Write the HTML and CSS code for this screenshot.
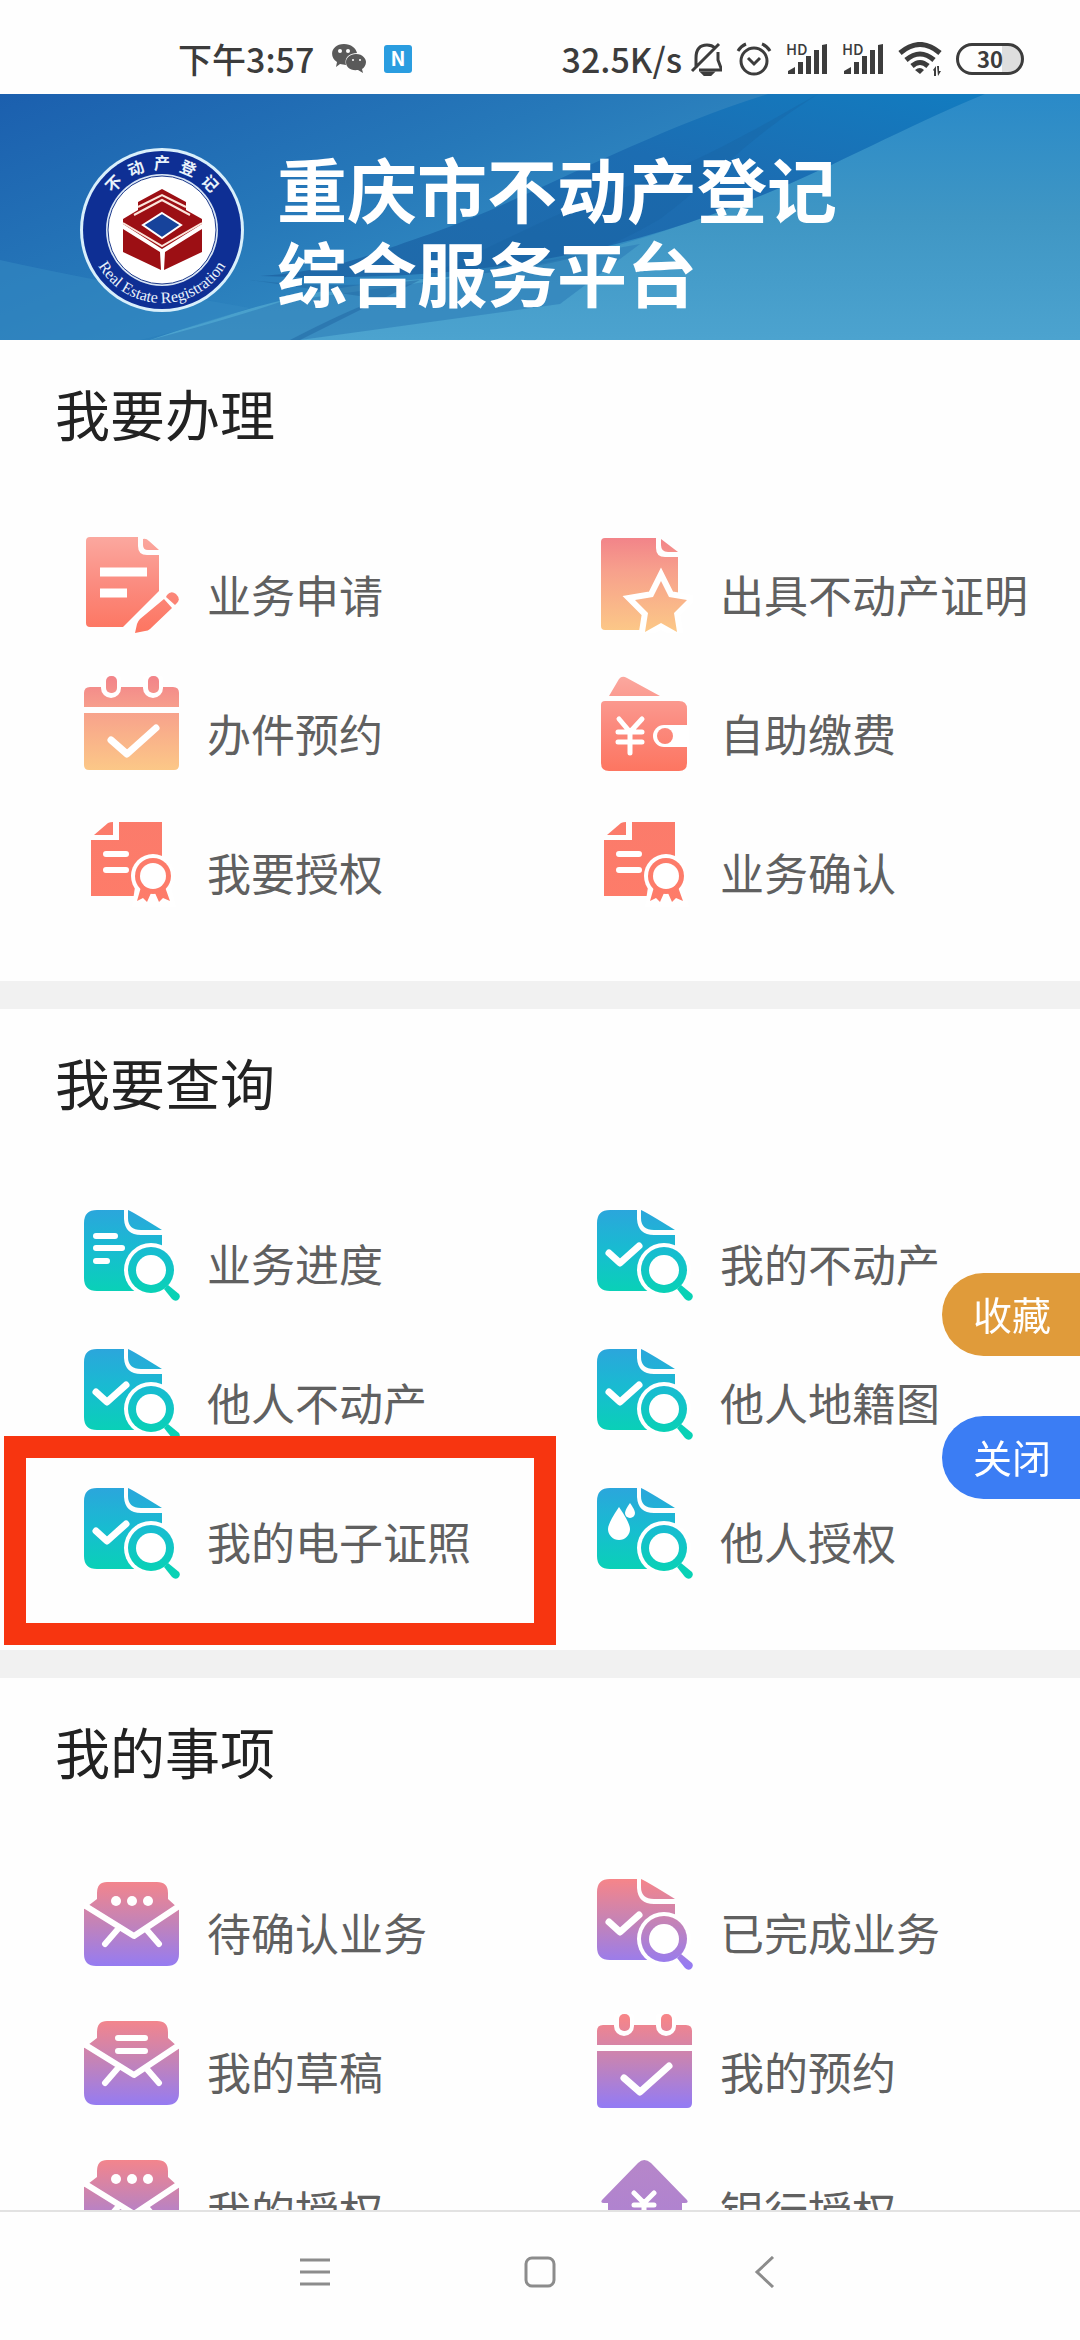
FILE: index.html
```html
<!DOCTYPE html>
<html lang="zh-CN">
<head>
    <meta charset="UTF-8">
    <meta name="viewport" content="width=device-width, initial-scale=1.0">
    <title>重庆市不动产登记综合服务平台</title>
    <link rel="stylesheet" href="styles.css">
</head>
<body>
    <!-- icon sprite -->
    <svg class="sprite" aria-hidden="true">
        <defs>
            <linearGradient id="coral" gradientUnits="userSpaceOnUse" x1="0" y1="0" x2="0" y2="96">
                <stop offset="0" stop-color="#fba89f"/>
                <stop offset="0.5" stop-color="#fb8b7f"/>
                <stop offset="1" stop-color="#fd7560"/>
            </linearGradient>
            <linearGradient id="flat" gradientUnits="userSpaceOnUse" x1="0" y1="0" x2="0" y2="96">
                <stop offset="0" stop-color="#fb7b6b"/>
                <stop offset="1" stop-color="#fe7c69"/>
            </linearGradient>
            <linearGradient id="orange" gradientUnits="userSpaceOnUse" x1="0" y1="0" x2="0" y2="96">
                <stop offset="0" stop-color="#f28389"/>
                <stop offset="0.35" stop-color="#f7a08c"/>
                <stop offset="1" stop-color="#fcc987"/>
            </linearGradient>
            <linearGradient id="teal" gradientUnits="userSpaceOnUse" x1="0" y1="4" x2="0" y2="88">
                <stop offset="0" stop-color="#2ba6dc"/>
                <stop offset="0.5" stop-color="#17bdd0"/>
                <stop offset="1" stop-color="#08d2b5"/>
            </linearGradient>
            <linearGradient id="purple" gradientUnits="userSpaceOnUse" x1="0" y1="4" x2="0" y2="92">
                <stop offset="0" stop-color="#f68589"/>
                <stop offset="0.5" stop-color="#c383b8"/>
                <stop offset="1" stop-color="#947bf3"/>
            </linearGradient>
            <linearGradient id="violet" gradientUnits="userSpaceOnUse" x1="0" y1="0" x2="0" y2="96">
                <stop offset="0" stop-color="#b787c8"/>
                <stop offset="1" stop-color="#ab80d4"/>
            </linearGradient>
            <linearGradient id="sky" x1="0" y1="0" x2="1" y2="0.6">
                <stop offset="0" stop-color="#1b5fae"/>
                <stop offset="0.4" stop-color="#2678b9"/>
                <stop offset="0.75" stop-color="#3590c4"/>
                <stop offset="1" stop-color="#4297ca"/>
            </linearGradient>
            <linearGradient id="sweep" x1="0" y1="1" x2="1" y2="0">
                <stop offset="0" stop-color="#2069a8"/>
                <stop offset="0.6" stop-color="#1c6db2"/>
                <stop offset="1" stop-color="#127cc0"/>
            </linearGradient>
            <linearGradient id="shine" x1="0" y1="0" x2="0" y2="1">
                <stop offset="0" stop-color="#2a8ac8"/>
                <stop offset="0.5" stop-color="#3f96c4"/>
                <stop offset="1" stop-color="#4ca3cf"/>
            </linearGradient>
        </defs>

        <symbol id="doc-pen" viewBox="0 0 96 96">
            <path d="M6 0H54V9Q54 18 63 18H75V54L39 90H6Q2 90 2 86V4Q2 0 6 0Z"/>
            <path d="M59 2Q62 1 65 4L75 13H64Q59 13 59 8Z"/>
            <path class="line w9" d="M16 35H63M16 56H43"/>
            <path d="M80 62L88 71L66 92Q64 94 61 94L51 96L53 87Q54 84 56 82Z"/>
            <path d="M83 58Q87 53 92 57Q97 62 93 66L91 68L82 60Z"/>
        </symbol>
        <symbol id="doc-star" viewBox="0 0 96 96">
            <path d="M8 1H59V11Q59 20 68 20H81V93H8Q4 93 4 89V5Q4 1 8 1Z"/>
            <path d="M64 2L81 15H71Q64 15 64 8Z"/>
            <path class="halo" d="M64 44L72 60L90 63L77 76L80 95L64 86L48 95L51 76L38 63L56 60Z"/>
            <path d="M64 44L72 60L90 63L77 76L80 95L64 86L48 95L51 76L38 63L56 60Z"/>
        </symbol>
        <symbol id="calendar" viewBox="0 0 96 96">
            <path d="M6 11H89Q95 11 95 17V31H0V17Q0 11 6 11Z"/>
            <path d="M0 37H95V89Q95 94 90 94H5Q0 94 0 89Z"/>
            <rect class="cut" x="17" y="-6" width="20" height="28" rx="10"/>
            <rect class="cut" x="59" y="-6" width="20" height="28" rx="10"/>
            <rect x="22" y="0" width="11" height="17" rx="5"/>
            <rect x="64" y="0" width="11" height="17" rx="5"/>
            <path class="line w7" d="M27 64L43 78L72 52"/>
        </symbol>
        <symbol id="wallet" viewBox="0 0 96 96">
            <path d="M22 3Q25 -1 30 2L63 20H12Z"/>
            <path d="M8 25H82Q90 25 90 33V87Q90 95 82 95H12Q4 95 4 87V29Q4 25 8 25Z"/>
            <path class="cut" d="M67 49H92V71H67A11 11 0 0 1 67 49Z"/>
            <circle cx="68" cy="60" r="8"/>
            <path class="line w5" d="M22 43L33 56L45 43M33 56V77M21 56H45M21 66H45"/>
        </symbol>
        <symbol id="cert" viewBox="0 0 96 96">
            <path d="M35 7H78V81H7V25H35Z"/>
            <path d="M10 20L24 8Q26 7 29 7V20Z"/>
            <path class="line w6" d="M22 39H42M22 55H42"/>
            <circle class="cut" cx="69" cy="61" r="22"/>
            <path class="cut" d="M51 72L87 72L92 92H48Z"/>
            <path d="M57 72L67 78L63 87L59 83L53 86Z"/>
            <path d="M81 72L71 78L75 87L79 83L86 86Z"/>
            <circle cx="69" cy="61" r="18"/>
            <circle class="cut" cx="69" cy="61" r="13"/>
        </symbol>
        <symbol id="search-base" viewBox="0 0 96 96">
            <path d="M13 4H40V13Q41 29 57 29H78V85H13Q0 85 0 72V17Q0 4 13 4Z"/>
            <path d="M44 4Q49 6 78 24H57Q44 24 44 12Z"/>
            <circle class="cut" cx="67" cy="64" r="27"/>
            <circle cx="67" cy="64" r="23"/>
            <circle class="cut" cx="67" cy="64" r="15"/>
            <path d="M80 83L84 79L95 88Q97 91 94 94Q91 96 88 93Z"/>
        </symbol>
        <symbol id="search-list" viewBox="0 0 96 96">
            <use href="#search-base" width="96" height="96"/>
            <path class="line w6" d="M12 30H31M12 42H38M12 55H23"/>
        </symbol>
        <symbol id="search-check" viewBox="0 0 96 96">
            <use href="#search-base" width="96" height="96"/>
            <path class="line w7" d="M12 47L23 57L42 40"/>
        </symbol>
        <symbol id="search-drop" viewBox="0 0 96 96">
            <use href="#search-base" width="96" height="96"/>
            <path class="cut" d="M22 23Q33 39 33 45A11 11 0 0 1 11 45Q11 39 22 23Z"/>
            <path class="cut" d="M33 19Q38 26 38 29A5 5 0 0 1 28 29Q28 26 33 19Z"/>
        </symbol>
        <symbol id="mail-base" viewBox="0 0 96 96">
            <path d="M23 7H73Q84 7 84 18V24L95 34V79Q95 91 83 91H12Q0 91 0 79V34L13 24V18Q13 7 23 7Z"/>
            <path class="line w6" d="M0 30L50 61L95 31M34 54L21 69M62 54L75 69"/>
        </symbol>
        <symbol id="mail-dots" viewBox="0 0 96 96">
            <use href="#mail-base" width="96" height="96"/>
            <circle class="cut" cx="32" cy="26" r="5"/>
            <circle class="cut" cx="48" cy="26" r="5"/>
            <circle class="cut" cx="64" cy="26" r="5"/>
        </symbol>
        <symbol id="mail-lines" viewBox="0 0 96 96">
            <use href="#mail-base" width="96" height="96"/>
            <path class="line w6" d="M34 24H61M34 37H61"/>
        </symbol>
        <symbol id="house" viewBox="0 0 96 96">
            <path d="M41 10Q47 4 54 10L90 47Q92 50 88 50H85V91H11V50H7Q3 50 5 47Z"/>
            <path class="line w5" d="M37 40L47 50L57 40M47 50V72M37 52H57M37 61H57"/>
        </symbol>
        <symbol id="signal" viewBox="0 0 42 34">
            <text class="hd" x="0" y="13">HD</text>
            <path d="M2 32V29L9 25V32ZM12 32V20H17V32ZM20 32V14H25V32ZM28 32V8H33V32ZM36 32V3L41 2V32Z"/>
        </symbol>
    </svg>

    <div class="statusbar">
        <span>下午3:57</span>
        <svg class="wechat" width="34" height="30" viewBox="0 0 34 30">
            <path d="M12 0C19 0 24 4 25 9C17 9 12 14 14 21L8 20L4 23L5 18C-4 12 0 0 12 0Z"/>
            <path d="M24 10C31 10 34 15 34 18C34 21 32 24 30 25L31 29L26 26C18 27 14 23 14 18C14 14 18 10 24 10Z"/>
            <g fill="#fff"><circle cx="8" cy="7" r="2"/><circle cx="16" cy="7" r="2"/><circle cx="21" cy="16" r="1"/><circle cx="28" cy="16" r="1"/></g>
        </svg>
        <svg class="note" width="28" height="28" viewBox="0 0 28 28">
            <rect width="28" height="28" rx="3" fill="#2a9de0"/>
            <text class="note-n" x="14" y="21">N</text>
        </svg>
        <span class="speed">32.5K/s</span>
        <svg class="stroke" width="32" height="34" viewBox="0 0 32 34">
            <path d="M6 26V16Q6 3 17 3Q22 3 25 6M28 10V18L31 26V28H9M2 29L29 2"/>
            <path d="M13 31H22L20 33H15Z"/>
        </svg>
        <svg class="stroke" width="36" height="34" viewBox="0 0 36 34">
            <circle cx="18" cy="19" r="13"/>
            <path d="M12 16L18 22L24 16M2 9Q5 4 10 2M34 9Q31 4 26 2"/>
        </svg>
        <svg width="42" height="34"><use href="#signal"/></svg>
        <svg width="42" height="34"><use href="#signal"/></svg>
        <svg class="wifi" width="44" height="34" viewBox="0 0 44 34">
            <path d="M2 11Q22 -6 42 11M8 18Q22 6 36 18M14 24Q22 17 30 24"/>
            <path class="solid" d="M17 28Q22 24 26 28L22 32ZM35 28L38 24V34H36V29ZM39 24H41V29H43L40 34Z"/>
        </svg>
        <span class="battery">30</span>
    </div>

    <main class="content">
        <header class="banner">
            <svg class="banner-bg" viewBox="0 0 1080 246" preserveAspectRatio="none" aria-hidden="true">
                <rect width="1080" height="246" fill="url(#sky)"/>
                <path d="M985 0H1080V246H150C240 215 330 190 410 186C570 175 660 140 760 102C840 70 900 35 985 0Z" fill="url(#shine)"/>
                <path d="M150 246Q230 225 280 208L440 186L640 150L560 210L300 246Z" fill="#2d7db8" opacity="0.6"/>
                <path d="M768 0H985C900 35 840 70 760 102C620 160 470 190 260 182C340 176 370 160 430 140C540 100 640 40 768 0Z" fill="url(#sweep)"/>
                <path d="M818 0C760 32 700 70 620 95C540 125 480 160 420 185C560 175 600 160 660 125C720 80 740 50 818 0Z" fill="#17609f" opacity="0.3"/>
                <path d="M0 166Q90 186 250 214Q200 232 140 246H0Z" fill="#3488c2" opacity="0.6"/>
                <path d="M250 186Q340 196 420 186L300 246H290Q350 215 380 205Z" fill="#1f66a2" opacity="0.5"/>
            </svg>
            <svg class="seal" width="164" height="164" viewBox="0 0 164 164" role="img" aria-label="不动产登记">
                <circle cx="82" cy="82" r="82" fill="#d9effb"/>
                <circle cx="82" cy="82" r="79" fill="#0e2f94"/>
                <circle cx="82" cy="82" r="56" fill="#d9e6f5"/>
                <circle cx="82" cy="82" r="54" fill="#fff" stroke="#1d3a8c" stroke-width="1"/>
                <path id="ring" d="M9 82A73 73 0 0 0 155 82" fill="none"/>
                <g class="seal-cn">
                    <text x="82" y="21" transform="rotate(-46 82 82)">不</text>
                    <text x="82" y="21" transform="rotate(-23 82 82)">动</text>
                    <text x="82" y="21">产</text>
                    <text x="82" y="21" transform="rotate(23 82 82)">登</text>
                    <text x="82" y="21" transform="rotate(46 82 82)">记</text>
                </g>
                <text class="seal-en"><textPath href="#ring" startOffset="50%">Real Estate Registration</textPath></text>
                <path d="M82 41L106 54V62L122 71V76L82 101L43 76V71L58 62V54Z" fill="#9c0f14"/>
                <path d="M43 81L80 104L81 122L43 104ZM122 81L85 104L84 122L122 104Z" fill="#9c0f14"/>
                <path d="M58 59L82 47L106 59M54 67L82 52L110 67M43 75L82 98L122 75" fill="none" stroke="#fbe6dc" stroke-width="2"/>
                <path d="M82 65L101 77L82 90L63 77Z" fill="#17439b" stroke="#fff" stroke-width="2"/>
            </svg>
            <h1>重庆市不动产登记<br>综合服务平台</h1>
        </header>

        <section class="panel">
            <h2>我要办理</h2>
            <div class="grid">
                <a class="item" href="#"><svg class="icon coral"><use href="#doc-pen"/></svg><span>业务申请</span></a>
                <a class="item" href="#"><svg class="icon orange"><use href="#doc-star"/></svg><span>出具不动产证明</span></a>
                <a class="item" href="#"><svg class="icon orange"><use href="#calendar"/></svg><span>办件预约</span></a>
                <a class="item" href="#"><svg class="icon coral"><use href="#wallet"/></svg><span>自助缴费</span></a>
                <a class="item" href="#"><svg class="icon flat"><use href="#cert"/></svg><span>我要授权</span></a>
                <a class="item" href="#"><svg class="icon flat"><use href="#cert"/></svg><span>业务确认</span></a>
            </div>
        </section>

        <section class="panel">
            <h2>我要查询</h2>
            <div class="grid">
                <a class="item" href="#"><svg class="icon teal"><use href="#search-list"/></svg><span>业务进度</span></a>
                <a class="item" href="#"><svg class="icon teal"><use href="#search-check"/></svg><span>我的不动产</span></a>
                <a class="item" href="#"><svg class="icon teal"><use href="#search-check"/></svg><span>他人不动产</span></a>
                <a class="item" href="#"><svg class="icon teal"><use href="#search-check"/></svg><span>他人地籍图</span></a>
                <a class="item marked" href="#"><svg class="icon teal"><use href="#search-check"/></svg><span>我的电子证照</span></a>
                <a class="item" href="#"><svg class="icon teal"><use href="#search-drop"/></svg><span>他人授权</span></a>
            </div>
        </section>

        <section class="panel">
            <h2>我的事项</h2>
            <div class="grid">
                <a class="item" href="#"><svg class="icon purple"><use href="#mail-dots"/></svg><span>待确认业务</span></a>
                <a class="item" href="#"><svg class="icon purple"><use href="#search-check"/></svg><span>已完成业务</span></a>
                <a class="item" href="#"><svg class="icon purple"><use href="#mail-lines"/></svg><span>我的草稿</span></a>
                <a class="item" href="#"><svg class="icon purple"><use href="#calendar"/></svg><span>我的预约</span></a>
                <a class="item" href="#"><svg class="icon purple"><use href="#mail-dots"/></svg><span>我的授权</span></a>
                <a class="item" href="#"><svg class="icon violet"><use href="#house"/></svg><span>银行授权</span></a>
            </div>
        </section>
    </main>

    <div class="floating">
        <button type="button" class="collect">收藏</button>
        <button type="button" class="close">关闭</button>
    </div>

    <nav class="navbar">
        <button type="button" aria-label="菜单">
            <svg width="32" height="32" viewBox="0 0 32 32"><path d="M1 4H31M1 16H31M1 28H31"/></svg>
        </button>
        <button type="button" aria-label="主页">
            <svg width="32" height="32" viewBox="0 0 32 32"><rect x="2" y="2" width="28" height="28" rx="6"/></svg>
        </button>
        <button type="button" aria-label="返回">
            <svg width="32" height="32" viewBox="0 0 32 32"><path d="M24 1L8 16L24 31"/></svg>
        </button>
    </nav>
</body>
</html>
```
FILE: styles.css
```css
* {
    box-sizing: border-box;
}
body {
    display: flex;
    flex-direction: column;
    height: 100vh;
    margin: 0;
    overflow: hidden;
    background-color: #fefefe;
    font-family: "Noto Sans CJK SC", sans-serif;
    color: #606060;
}
.sprite {
    position: absolute;
    width: 0;
    height: 0;
}

/* status bar */
.statusbar {
    display: flex;
    align-items: center;
    flex: none;
    gap: 14px;
    height: 94px;
    padding: 24px 56px 0 178px;
    font-size: 34px;
    font-weight: 500;
    line-height: 40px;
    color: #3c3c3c;
    fill: #3c3c3c;
}
.statusbar svg {
    flex: none;
}
.wechat {
    margin-left: 4px;
    fill: #5a5a5a;
}
.note {
    margin-left: 4px;
}
.note-n {
    font: bold 20px "Noto Sans CJK SC", sans-serif;
    text-anchor: middle;
    fill: #fff;
}
.speed {
    margin: 0 -6px 0 auto;
}
.stroke {
    fill: none;
    stroke: #3c3c3c;
    stroke-width: 3;
}
.hd {
    font: 500 15px "Noto Sans CJK SC", sans-serif;
}
.wifi {
    fill: none;
    stroke: #3c3c3c;
    stroke-width: 5;
}
.solid {
    fill: #3c3c3c;
    stroke: none;
}
.battery {
    width: 68px;
    height: 32px;
    border: 3px solid #3c3c3c;
    border-radius: 16px;
    background: linear-gradient(to right, #fefefe 70%, #dedede 70%);
    font-size: 22px;
    font-weight: bold;
    line-height: 24px;
    text-align: center;
}

/* scrolling content */
.content {
    flex: 1;
    min-height: 0;
    overflow-y: auto;
    scrollbar-width: none;
}
.banner {
    display: flex;
    align-items: center;
    gap: 33px;
    position: relative;
    height: 246px;
    padding: 25px 80px 0;
}
.banner-bg {
    position: absolute;
    inset: 0;
    width: 100%;
    height: 100%;
}
.seal {
    position: relative;
    flex: none;
}
.seal-cn {
    font: bold 16px "Noto Sans CJK SC", sans-serif;
    text-anchor: middle;
    fill: #e8f2fb;
}
.seal-en {
    font: 16px "Liberation Serif", serif;
    text-anchor: middle;
    fill: #e8f2fb;
}
h1 {
    position: relative;
    margin: 0;
    font-size: 70px;
    font-weight: bold;
    line-height: 84px;
    color: #fff;
}
.panel {
    padding-bottom: 70px;
}
.panel + .panel {
    border-top: 28px solid #f1f1f1;
}
h2 {
    margin: 0;
    padding: 32px 55px 85px;
    font-size: 55px;
    font-weight: normal;
    line-height: 80px;
    color: #222;
}
.grid {
    display: grid;
    grid-template-columns: 1fr 1fr;
    gap: 43px 30px;
    padding-left: 84px;
}
.item {
    display: flex;
    gap: 27px;
    position: relative;
    height: 96px;
    color: inherit;
    font-size: 44px;
    line-height: 72px;
    text-decoration: none;
}
.item span {
    padding-top: 21px;
    white-space: nowrap;
}
.marked::after {
    content: "";
    box-sizing: border-box;
    position: absolute;
    top: -48px;
    left: -80px;
    width: 552px;
    height: 209px;
    border: 22px solid #f73510;
}

/* icons */
.icon {
    flex: none;
    width: 96px;
    height: 96px;
    overflow: visible;
}
.coral { fill: url(#coral); }
.flat { fill: url(#flat); }
.orange { fill: url(#orange); }
.teal { fill: url(#teal); }
.purple { fill: url(#purple); }
.violet { fill: url(#violet); }
.cut {
    fill: #fff;
}
.halo {
    fill: #fff;
    stroke: #fff;
    stroke-width: 12;
}
.line {
    fill: none;
    stroke: #fff;
    stroke-linecap: round;
    stroke-linejoin: round;
}
.w5 { stroke-width: 5; }
.w6 { stroke-width: 6; }
.w7 { stroke-width: 7; }
.w9 { stroke-width: 9; stroke-linecap: butt; }

/* side buttons */
.floating {
    display: flex;
    flex-direction: column;
    gap: 60px;
    position: fixed;
    top: 1273px;
    right: 0;
}
.floating button {
    width: 138px;
    height: 83px;
    padding: 0 0 4px 31px;
    border: none;
    border-radius: 42px 0 0 42px;
    font-family: inherit;
    font-size: 39px;
    line-height: 56px;
    text-align: left;
    color: #fff;
    cursor: pointer;
}
.floating .collect {
    background-color: #e09b3a;
}
.floating .close {
    background-color: #3b7df4;
}

/* bottom navigation */
.navbar {
    display: flex;
    justify-content: center;
    flex: none;
    height: 130px;
    border-top: 2px solid #e2e2e2;
    background-color: #fefefe;
}
.navbar button {
    width: 225px;
    padding: 0 0 8px;
    border: none;
    background: none;
    cursor: pointer;
}
.navbar svg {
    vertical-align: middle;
    fill: none;
    stroke: #8c8c8c;
    stroke-width: 3;
}
```
